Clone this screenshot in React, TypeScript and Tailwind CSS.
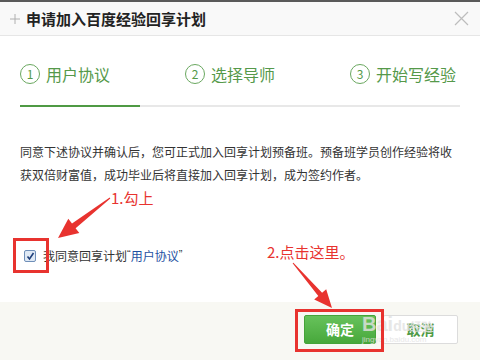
import React from 'react'

const steps = [
  { n: '1', label: '用户协议' },
  { n: '2', label: '选择导师' },
  { n: '3', label: '开始写经验' },
]

function Arrows() {
  return (
    <svg className="pointer-events-none absolute left-0 top-0" width="480" height="360" viewBox="0 0 480 360">
      <polygon
        fill="#e8332f"
        points="110.3,198.4 75.6,228.2 79.3,232.9 58,238 68.3,218.7 72,223.4 109.7,197.6"
      />
      <polygon
        fill="#e8332f"
        points="292.6,263.3 318.3,296 314.2,299.6 332,308 326.2,289.2 322.1,292.8 293.4,262.7"
      />
    </svg>
  )
}

const latin = { fontFamily: '"Liberation Sans", sans-serif' }

export default function App() {
  return (
    <div
      className="relative h-[360px] w-[480px] overflow-hidden bg-white"
      style={{ fontFamily: '"Noto Sans CJK SC", "Noto Sans", sans-serif' }}
    >
      <div className="h-[2px] bg-[#5a5a5a]" />

      {/* header */}
      <div className="flex h-[34px] items-center border-b border-[#e6e6e6] bg-[#f9f9f9] pl-[9px] pr-[10px]">
        <svg width="12" height="12" viewBox="0 0 12 12" className="mr-[5px]">
          <path d="M6 1v10M1 6h10" stroke="#b0b0b0" strokeWidth="1" />
        </svg>
        <span className="text-[15px] font-bold leading-none text-[#222]">申请加入百度经验回享计划</span>
        <svg width="15" height="15" viewBox="0 0 15 15" className="ml-auto mr-[1px]">
          <path d="M1 1l13 13M14 1L1 14" stroke="#bdbdbd" strokeWidth="1.2" />
        </svg>
      </div>

      {/* steps */}
      <div className="px-5 pt-[28px]">
        <div className="flex items-center justify-between pr-[4px]">
          {steps.map((s) => (
            <div key={s.n} className="flex items-center text-[#55994a]">
              <span className="flex h-[20px] w-[20px] items-center justify-center rounded-full border border-[#6aa860] text-[12px] leading-none">
                {s.n}
              </span>
              <span className="ml-[6px] text-[16px] leading-none">{s.label}</span>
            </div>
          ))}
        </div>
        <div className="mt-[21px] flex h-[2px] bg-[#e8e8e8]">
          <div className="w-[120px] bg-[#4f9a44]" />
        </div>

        <p className="mt-[33px] text-[12px] leading-[23px] text-[#333]">
          同意下述协议并确认后，您可正式加入回享计划预备班。预备班学员创作经验将收获双倍财富值，成功毕业后将直接加入回享计划，成为签约作者。
        </p>

        <div className="mt-[62px] flex h-[16px] items-center pl-[4px]">
          <span className="flex h-[12px] w-[12px] items-center justify-center rounded-[2px] border border-[#6f8fb8] bg-[#dfe9f5]">
            <svg width="9" height="9" viewBox="0 0 9 9">
              <path d="M1.5 4.5l2 2.5 4-6" fill="none" stroke="#1f3f7a" strokeWidth="1.6" />
            </svg>
          </span>
          <span className="ml-[7px] flex items-start text-[12px] leading-none text-[#333]">
            我同意回享计划
            <span style={latin} className="text-[11px] leading-[9px]">“</span>
            <span className="text-[#1e50a2]">用户协议</span>
            <span style={latin} className="text-[11px] leading-[9px]">”</span>
          </span>
        </div>
      </div>

      {/* footer */}
      <div className="absolute bottom-0 left-0 right-0 flex h-[58px] justify-end gap-[7px] bg-[#f8f8f3] pr-[22px] pt-[13px]">
        <button className="h-[29px] w-[72px] rounded-[2px] border border-[#46a33a] bg-gradient-to-b from-[#67c25b] to-[#47a83b] text-[14px] font-bold text-white">
          确定
        </button>
        <button className="h-[29px] w-[75px] rounded-[2px] border border-[#dcdcdc] bg-white text-[14px] font-bold text-[#4f9a44]">
          取消
        </button>
      </div>

      {/* watermark */}
      <div className="pointer-events-none absolute left-[362px] top-[314px] flex flex-col leading-none text-[#e2e2e2] opacity-80">
        <span className="text-[20px] font-bold" style={latin}>
          Bai<span className="text-[14px]">du</span>
          <span className="text-[12px]">经验</span>
        </span>
        <span className="mt-[2px] text-[8px]" style={latin}>
          jingyan.baidu.com
        </span>
      </div>

      {/* annotations */}
      <div className="absolute left-[13px] top-[238px] h-[35px] w-[36px] border-[3px] border-[#e8332f]" />
      <div className="absolute left-[295px] top-[309px] h-[43px] w-[89px] border-[3px] border-[#e8332f]" />
      <span className="absolute left-[111px] top-[190px] text-[15px] leading-none text-[#e8332f]">1.勾上</span>
      <span className="absolute left-[267px] top-[244px] text-[15px] leading-none text-[#e8332f]">2.点击这里。</span>
      <Arrows />
    </div>
  )
}
